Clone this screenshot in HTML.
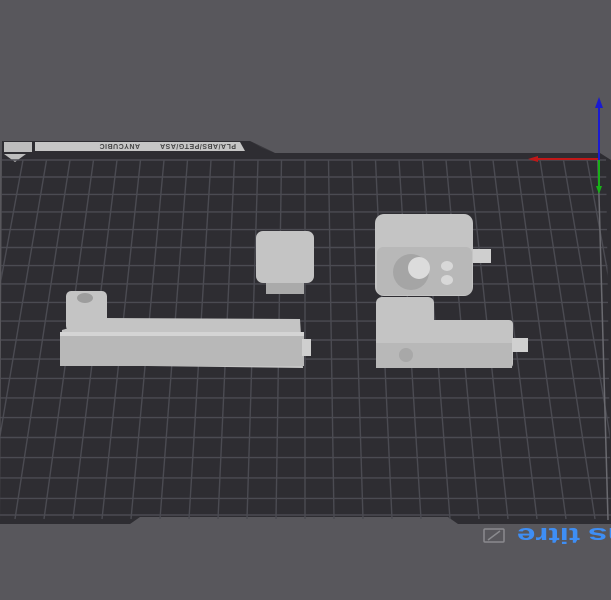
<!DOCTYPE html>
<html><head><style>
html,body{margin:0;padding:0;width:611px;height:600px;overflow:hidden;background:#58575c}
svg{display:block}
</style></head><body>
<svg width="611" height="600" viewBox="0 0 611 600" xmlns="http://www.w3.org/2000/svg">
<defs>
<clipPath id="pc"><polygon points="2,158 606,158 611,520 0,520"/></clipPath>
</defs>
<rect width="611" height="600" fill="#58575c"/>
<polygon points="2,141 250,141 275,153 600,153 611,160 611,524 458,524 448,517 140,517 130,524 0,524" fill="#2e2d32"/>
<polygon points="250,141 262,148 275,153" fill="#3a393e"/>
<rect x="4" y="142" width="28" height="10" fill="#bdbdbd"/>
<polygon points="35,142 240,142 245,151 35,151" fill="#c6c6c6"/>
<text transform="translate(236,144) rotate(180)" font-family="Liberation Sans,sans-serif" font-size="7" font-weight="bold" fill="#444" letter-spacing="0.5">PLA/ABS/PETG/ASA</text>
<text transform="translate(140,144) rotate(180)" font-family="Liberation Sans,sans-serif" font-size="7" font-weight="bold" fill="#444" letter-spacing="0.5">ANYCUBIC</text>
<polygon points="4,154 26,154 15,162" fill="#bdbdbd"/>
<g clip-path="url(#pc)" stroke="#4b4b52" stroke-width="1.4">
<line x1="0" y1="160" x2="611" y2="160"/><line x1="0" y1="177" x2="611" y2="177"/><line x1="0" y1="194.4" x2="611" y2="194.4"/><line x1="0" y1="211.9" x2="611" y2="211.9"/><line x1="0" y1="229.6" x2="611" y2="229.6"/><line x1="0" y1="247.5" x2="611" y2="247.5"/><line x1="0" y1="265.6" x2="611" y2="265.6"/><line x1="0" y1="283.9" x2="611" y2="283.9"/><line x1="0" y1="302.4" x2="611" y2="302.4"/><line x1="0" y1="321.1" x2="611" y2="321.1"/><line x1="0" y1="340" x2="611" y2="340"/><line x1="0" y1="359.1" x2="611" y2="359.1"/><line x1="0" y1="378.4" x2="611" y2="378.4"/><line x1="0" y1="397.9" x2="611" y2="397.9"/><line x1="0" y1="417.6" x2="611" y2="417.6"/><line x1="0" y1="437.5" x2="611" y2="437.5"/><line x1="0" y1="457.6" x2="611" y2="457.6"/><line x1="0" y1="477.9" x2="611" y2="477.9"/><line x1="0" y1="498.4" x2="611" y2="498.4"/><line x1="0" y1="515" x2="611" y2="515"/>
<line x1="0.5" y1="160" x2="-72" y2="519"/><line x1="23" y1="160" x2="-43" y2="519"/><line x1="46.5" y1="160" x2="-14" y2="519"/><line x1="70" y1="160" x2="15" y2="519"/><line x1="93.5" y1="160" x2="44" y2="519"/><line x1="117" y1="160" x2="73" y2="519"/><line x1="140.5" y1="160" x2="102" y2="519"/><line x1="164" y1="160" x2="131" y2="519"/><line x1="187.5" y1="160" x2="160" y2="519"/><line x1="211" y1="160" x2="189" y2="519"/><line x1="234.5" y1="160" x2="218" y2="519"/><line x1="258" y1="160" x2="247" y2="519"/><line x1="281.5" y1="160" x2="276" y2="519"/><line x1="305" y1="160" x2="305" y2="519"/><line x1="328.5" y1="160" x2="334" y2="519"/><line x1="352" y1="160" x2="363" y2="519"/><line x1="375.5" y1="160" x2="392" y2="519"/><line x1="399" y1="160" x2="421" y2="519"/><line x1="422.5" y1="160" x2="450" y2="519"/><line x1="446" y1="160" x2="479" y2="519"/><line x1="469.5" y1="160" x2="508" y2="519"/><line x1="493" y1="160" x2="537" y2="519"/><line x1="516.5" y1="160" x2="566" y2="519"/><line x1="540" y1="160" x2="595" y2="519"/><line x1="563.5" y1="160" x2="624" y2="519"/><line x1="587" y1="160" x2="653" y2="519"/>
</g>
<line x1="598" y1="160" x2="608" y2="520" stroke="#6a6a70" stroke-width="1.5"/>
<g fill="#c4c4c4">
<rect x="66" y="291" width="41" height="40" rx="5"/>
<ellipse cx="85" cy="298" rx="8" ry="5" fill="#9d9d9d"/>
<polygon points="62,330 104,318 300,319 303,368 70,365 60,360"/>
<rect x="60" y="332" width="244" height="4" fill="#d4d4d4"/>
<rect x="60" y="336" width="244" height="30" fill="#b8b8b8"/>
<rect x="302" y="339" width="9" height="17" fill="#cfcfcf"/>
<rect x="256" y="231" width="58" height="52" rx="7"/>
<rect x="266" y="283" width="38" height="11" fill="#aaaaaa"/>
<rect x="375" y="214" width="98" height="82" rx="9"/>
<rect x="377" y="247" width="95" height="48" rx="6" fill="#b8b8b8"/>
<circle cx="411" cy="272" r="18" fill="#a5a5a5"/>
<circle cx="419" cy="268" r="11" fill="#dcdcdc"/>
<ellipse cx="447" cy="266" rx="6" ry="5" fill="#d8d8d8"/>
<ellipse cx="447" cy="280" rx="6" ry="5" fill="#d8d8d8"/>
<rect x="473" y="249" width="18" height="14" fill="#cfcfcf"/>
<rect x="376" y="297" width="58" height="50" rx="6"/>
<rect x="376" y="320" width="137" height="48" rx="4"/>
<rect x="376" y="343" width="136" height="25" fill="#b8b8b8"/>
<circle cx="406" cy="355" r="7" fill="#a8a8a8"/>
<rect x="512" y="338" width="16" height="14" fill="#d0d0d0"/>
</g>
<line x1="599" y1="160" x2="599" y2="104" stroke="#1a1ad0" stroke-width="2"/>
<polygon points="599,97 595,108 603,108" fill="#1a1ad0"/>
<line x1="598" y1="159" x2="532" y2="159" stroke="#c01818" stroke-width="2"/>
<polygon points="528,159 538,156 538,162" fill="#c01818"/>
<line x1="599" y1="160" x2="599" y2="190" stroke="#18b018" stroke-width="2"/>
<polygon points="599,194 596,186 602,186" fill="#18b018"/>
<rect x="484" y="529" width="20" height="13" fill="none" stroke="#8a8a8e" stroke-width="1.5" rx="1"/>
<line x1="488" y1="540" x2="500" y2="531" stroke="#8a8a8e" stroke-width="1.5"/>
<text transform="translate(580,528) rotate(180)" font-family="Liberation Sans,sans-serif" font-size="22" font-weight="bold" fill="#3e8ef5" textLength="63" lengthAdjust="spacingAndGlyphs">titre</text>
<text transform="translate(668,528) rotate(180)" font-family="Liberation Sans,sans-serif" font-size="22" font-weight="bold" fill="#3e8ef5" textLength="80" lengthAdjust="spacingAndGlyphs">sans</text>
</svg>
</body></html>
